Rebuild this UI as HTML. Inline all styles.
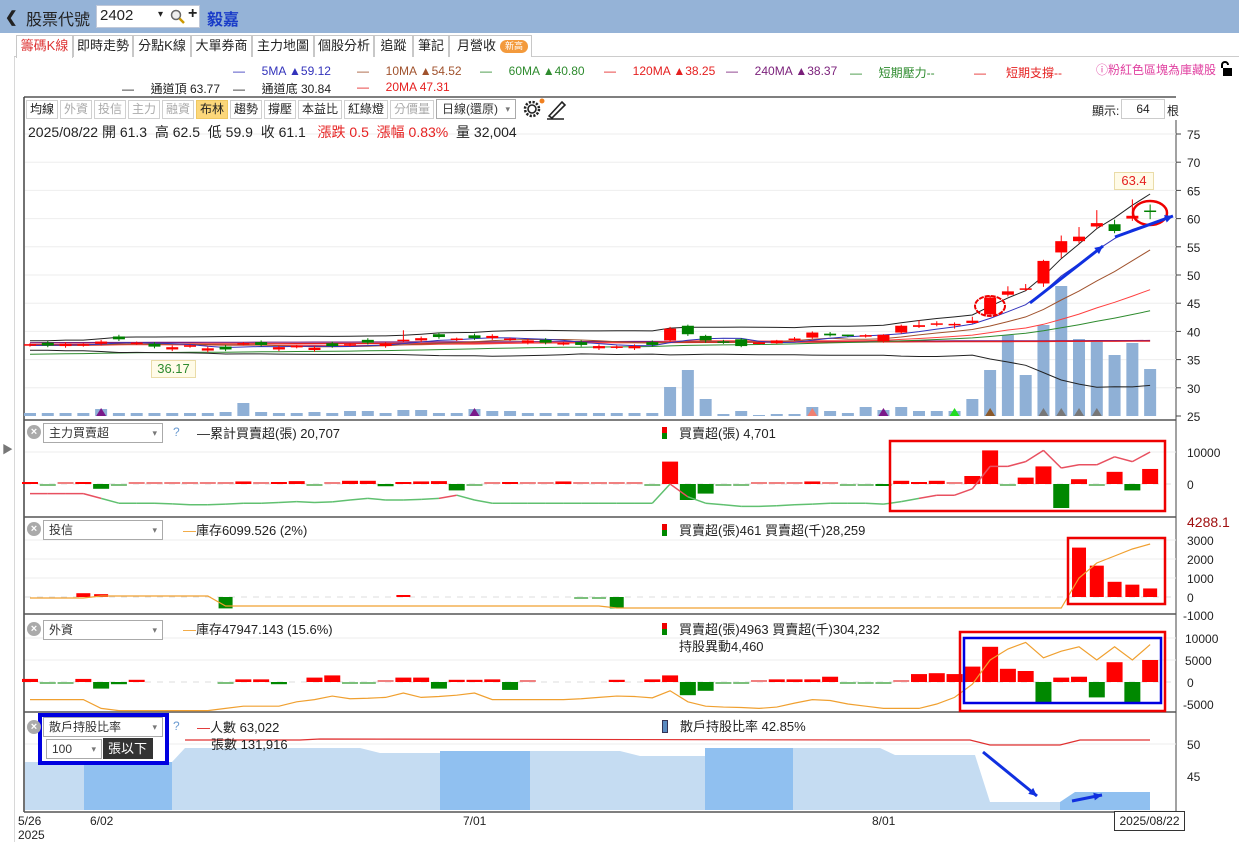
<!DOCTYPE html>
<html><head><meta charset="utf-8">
<style>
*{margin:0;padding:0;box-sizing:border-box}
body{width:1239px;height:845px;overflow:hidden;background:#fff;font-family:"Liberation Sans","Noto Sans CJK TC",sans-serif;position:relative;color:#222}
.a{position:absolute;white-space:nowrap}
#hdr{position:absolute;left:0;top:0;width:1239px;height:33px;background:#95b3d7}
.tab{position:absolute;top:35px;height:22px;border:1px solid #c8c8c8;border-bottom:none;font-size:13px;line-height:20px;text-align:center;background:#fff;color:#222}
.btn{position:absolute;top:100px;height:19px;border:1px solid #d0d0d0;font-size:12px;line-height:17px;text-align:center;background:#fff}
.lg{position:absolute;font-size:12px;white-space:nowrap}
.sel{position:absolute;height:20px;border:1px solid #aaa;background:#fff;font-size:12px;line-height:18px;padding-left:5px;color:#333}
.sel:after{content:"▾";position:absolute;right:5px;top:0;font-size:9px;color:#777}
.xc{position:absolute;width:14px;height:14px;border-radius:7px;background:#aaa;color:#fff;font-size:11px;line-height:14px;text-align:center;font-weight:bold}
.ax{position:absolute;font-size:12px;color:#222}
</style></head><body>
<div id="hdr"></div>
<div class="a" style="left:5px;top:8px;font-size:15px;font-weight:bold;color:#222">❮</div>
<div class="a" style="left:26px;top:6px;font-size:16px;color:#222">股票代號</div>
<div class="a" style="left:96px;top:5px;width:104px;height:23px;background:#fff;border:1px solid #c0c8d8"></div>
<div class="a" style="left:100px;top:7px;font-size:15px">2402</div>
<div class="a" style="left:158px;top:9px;font-size:10px">▾</div>
<svg class="a" style="left:170px;top:9px" width="16" height="16"><circle cx="6" cy="6" r="4.5" fill="#eee" stroke="#666" stroke-width="1.5"/><line x1="9.5" y1="9.5" x2="14" y2="14" stroke="#c90" stroke-width="2.5"/></svg>
<div class="a" style="left:188px;top:5px;font-size:16px;font-weight:bold">+</div>
<div class="a" style="left:207px;top:6px;font-size:16px;font-weight:bold;color:#1a3cc8">毅嘉</div>

<div class="a" style="left:14px;top:56px;width:1225px;height:1px;background:#ccc"></div>
<div class="tab" style="left:16px;width:57px;color:#d33;height:23px">籌碼K線</div>
<div class="tab" style="left:73px;width:60px">即時走勢</div>
<div class="tab" style="left:133px;width:58px">分點K線</div>
<div class="tab" style="left:191px;width:61px">大單券商</div>
<div class="tab" style="left:252px;width:62px">主力地圖</div>
<div class="tab" style="left:314px;width:60px">個股分析</div>
<div class="tab" style="left:374px;width:39px">追蹤</div>
<div class="tab" style="left:413px;width:36px">筆記</div>
<div class="tab" style="left:449px;width:83px;text-align:left;padding-left:7px">月營收<span style="display:inline-block;margin-left:4px;background:#f39a3c;color:#fff;border-radius:8px;font-size:9px;line-height:13px;padding:0 5px;vertical-align:1px">新高</span></div>
<div class="a" style="left:14px;top:57px;width:1px;height:785px;background:#d8d8d8"></div>
<div class="a" style="left:2px;top:441px;font-size:11px;color:#777">▶</div>

<div class="lg" style="left:233px;top:64px;color:#3333bb">—&nbsp;&nbsp;&nbsp;&nbsp;&nbsp;5MA ▲59.12</div>
<div class="lg" style="left:357px;top:64px;color:#a0522d">—&nbsp;&nbsp;&nbsp;&nbsp;&nbsp;10MA ▲54.52</div>
<div class="lg" style="left:480px;top:64px;color:#2e8b2e">—&nbsp;&nbsp;&nbsp;&nbsp;&nbsp;60MA ▲40.80</div>
<div class="lg" style="left:604px;top:64px;color:#e52020">—&nbsp;&nbsp;&nbsp;&nbsp;&nbsp;120MA ▲38.25</div>
<div class="lg" style="left:726px;top:64px;color:#7a1f7a">—&nbsp;&nbsp;&nbsp;&nbsp;&nbsp;240MA ▲38.37</div>
<div class="lg" style="left:850px;top:64px;color:#2e8b2e">—&nbsp;&nbsp;&nbsp;&nbsp;&nbsp;短期壓力--</div>
<div class="lg" style="left:974px;top:64px;color:#e52020">—&nbsp;&nbsp;&nbsp;&nbsp;&nbsp;&nbsp;短期支撐--</div>
<div class="lg" style="left:1096px;top:61px;color:#e040a0">ⓘ粉紅色區塊為庫藏股</div>
<svg class="a" style="left:1219px;top:61px" width="14" height="16"><path d="M3 7 V4 a3 3 0 0 1 6 0" fill="none" stroke="#000" stroke-width="2"/><rect x="4" y="7" width="9" height="8" fill="#000"/></svg>
<div class="lg" style="left:122px;top:80px;color:#222">—&nbsp;&nbsp;&nbsp;&nbsp;&nbsp;通道頂 63.77</div>
<div class="lg" style="left:233px;top:80px;color:#222">—&nbsp;&nbsp;&nbsp;&nbsp;&nbsp;通道底 30.84</div>
<div class="lg" style="left:357px;top:80px;color:#e52020">—&nbsp;&nbsp;&nbsp;&nbsp;&nbsp;20MA 47.31</div>

<svg id="ch" class="a" style="left:0;top:0" width="1239" height="845"></svg>

<div class="btn" style="left:26px;width:32px">均線</div>
<div class="btn" style="left:60px;width:32px;color:#aaa">外資</div>
<div class="btn" style="left:94px;width:32px;color:#aaa">投信</div>
<div class="btn" style="left:128px;width:32px;color:#aaa">主力</div>
<div class="btn" style="left:162px;width:32px;color:#aaa">融資</div>
<div class="btn" style="left:196px;width:32px;background:#fcd77a;border-color:#f0c860">布林</div>
<div class="btn" style="left:230px;width:32px">趨勢</div>
<div class="btn" style="left:264px;width:32px">撐壓</div>
<div class="btn" style="left:298px;width:44px">本益比</div>
<div class="btn" style="left:344px;width:44px">紅綠燈</div>
<div class="btn" style="left:390px;width:44px;color:#aaa">分價量</div>
<div class="sel" style="left:436px;top:99px;width:80px">日線(還原)</div>
<svg class="a" style="left:522px;top:98px" width="50" height="22"><circle cx="10" cy="11" r="4" fill="none" stroke="#222" stroke-width="1.6"/><circle cx="10" cy="11" r="7" fill="none" stroke="#222" stroke-width="2.5" stroke-dasharray="2.2 1.5"/><circle cx="20" cy="3" r="2.5" fill="#f08020"/><path d="M27 18 L40 4 L43 7 L30 20 Z M25 21 H42" fill="none" stroke="#222" stroke-width="1.6"/></svg>
<div class="a" style="left:1092px;top:102px;font-size:12px">顯示:</div>
<div class="a" style="left:1121px;top:99px;width:44px;height:20px;border:1px solid #ccc;font-size:12px;line-height:18px;text-align:center">64</div>
<div class="a" style="left:1167px;top:102px;font-size:12px">根</div>
<div class="a" style="left:28px;top:122px;font-size:14px">2025/08/22 開 61.3&nbsp; 高 62.5&nbsp; 低 59.9&nbsp; 收 61.1&nbsp;&nbsp; <span style="color:#e52020">漲跌 0.5&nbsp; 漲幅 0.83%</span>&nbsp; 量 32,004</div>

<div class="a" style="left:1114px;top:172px;width:40px;height:18px;background:#fffbe8;border:1px solid #eadca8;color:#e52020;font-size:13px;text-align:center;line-height:16px">63.4</div>
<div class="a" style="left:151px;top:360px;width:45px;height:18px;background:#fffbe8;border:1px solid #eadca8;color:#2e8b2e;font-size:13px;text-align:center;line-height:16px">36.17</div>

<div class="xc" style="left:27px;top:425px">×</div>
<div class="sel" style="left:43px;top:423px;width:120px">主力買賣超</div>
<div class="a" style="left:173px;top:425px;font-size:12px;color:#6a9ad0">?</div>
<div class="lg" style="left:197px;top:423px;font-size:13px">—累計買賣超(張) 20,707</div>
<div class="lg" style="left:662px;top:423px;font-size:13px"><span style="display:inline-block;width:5px;height:12px;background:linear-gradient(#e00 50%,#080 50%);vertical-align:-1px;margin-right:12px"></span>買賣超(張) 4,701</div>

<div class="xc" style="left:27px;top:522px">×</div>
<div class="sel" style="left:43px;top:520px;width:120px">投信</div>
<div class="lg" style="left:183px;top:520px;font-size:13px"><span style="color:#f0a030">—</span>庫存6099.526 (2%)</div>
<div class="lg" style="left:662px;top:520px;font-size:13px"><span style="display:inline-block;width:5px;height:12px;background:linear-gradient(#e00 50%,#080 50%);vertical-align:-1px;margin-right:12px"></span>買賣超(張)461 買賣超(千)28,259</div>

<div class="xc" style="left:27px;top:622px">×</div>
<div class="sel" style="left:43px;top:620px;width:120px">外資</div>
<div class="lg" style="left:183px;top:619px;font-size:13px"><span style="color:#f0a030">—</span>庫存47947.143 (15.6%)</div>
<div class="lg" style="left:662px;top:619px;font-size:13px"><span style="display:inline-block;width:5px;height:12px;background:linear-gradient(#e00 50%,#080 50%);vertical-align:-1px;margin-right:12px"></span>買賣超(張)4963 買賣超(千)304,232</div>
<div class="lg" style="left:679px;top:636px;font-size:13px">持股異動4,460</div>

<div class="a" style="left:38px;top:713px;width:131px;height:52px;background:#fff;border:4px solid #0000e0"></div>
<div class="xc" style="left:27px;top:720px">×</div>
<div class="sel" style="left:43px;top:717px;width:120px">散戶持股比率</div>
<div class="sel" style="left:46px;top:739px;width:56px">100</div>
<div class="a" style="left:103px;top:738px;width:50px;height:21px;background:#333;color:#fff;font-size:13px;line-height:21px;padding-left:5px">張以下</div>
<div class="a" style="left:173px;top:719px;font-size:12px;color:#6a9ad0">?</div>
<div class="lg" style="left:197px;top:717px;font-size:13px"><span style="color:#d22">—</span>人數 63,022</div>
<div class="lg" style="left:211px;top:734px;font-size:13px">張數 131,916</div>
<div class="lg" style="left:662px;top:716px;font-size:13px"><span style="display:inline-block;width:6px;height:13px;background:#5a8ac0;border:1px solid #335;vertical-align:-2px;margin-right:12px"></span>散戶持股比率 42.85%</div>

<div class="ax" style="left:18px;top:814px">5/26<br>2025</div>
<div class="ax" style="left:90px;top:814px">6/02</div>
<div class="ax" style="left:463px;top:814px">7/01</div>
<div class="ax" style="left:872px;top:814px">8/01</div>
<div class="a" style="left:1114px;top:811px;width:71px;height:20px;border:1px solid #333;font-size:12px;line-height:18px;text-align:center;background:#fff">2025/08/22</div>

<script>
var S=document.getElementById('ch'),h='';
function X(i){return 30+i*17.78}
function P(p){return 134+(75-p)*5.64}
function L(x1,y1,x2,y2,c,w,e){h+='<line x1="'+x1+'" y1="'+y1+'" x2="'+x2+'" y2="'+y2+'" stroke="'+c+'" stroke-width="'+(w||1)+'" '+(e||'')+'/>'}
function R(x,y,w,hh,c){if(hh<0){y+=hh;hh=-hh}h+='<rect x="'+x+'" y="'+y+'" width="'+w+'" height="'+hh+'" fill="'+c+'"/>'}
function T(x,y,t,c,s){h+='<text x="'+x+'" y="'+y+'" font-size="'+(s||12)+'" fill="'+(c||'#222')+'" font-family="Liberation Sans,sans-serif">'+t+'</text>'}
function PL(pts,c,w){h+='<polyline points="'+pts.join(' ')+'" fill="none" stroke="'+c+'" stroke-width="'+(w||1)+'"/>'}
L(24,97,1176,97,'#555',1.5);L(24,97,24,812,'#444',1.5);L(1176,120,1176,812,'#444',1);
[420,517,614,712,812].forEach(function(y){L(24,y,1176,y,'#555',1.5)});
for(var p=25;p<=75;p+=5){var y=P(p);if(p>25)L(25,y,1176,y,'#eee');T(1187,y+5,p);L(1176,y,1181,y,'#444')}
var base=[37.6,37.5,37.8,37.6,38.2,38.6,37.9,37.3,37.2,37.4,37.0,36.8,37.8,37.6,37.2,37.3,37.1,37.4,37.6,38.0,37.8,38.4,38.8,39.0,38.6,38.8,39.2,38.6,38.4,38.0,37.8,37.6,37.4,37.2,37.4,37.6];
var O=[],C=[],H=[],Lo=[];
for(var i=0;i<36;i++){var c=base[i],o=(i%3==0)?c:(i%2?c+0.5:c-0.4);O.push(o);C.push(c);H.push(Math.max(o,c)+0.3+(i==21?1.5:0));Lo.push(Math.min(o,c)-0.3)}
var k=[[38.4,40.5,40.8,38.2],[41,39.5,41.2,39.2],[39.2,38.4,39.4,38],[38.1,38,38.5,37.8],[38.6,37.4,38.8,37.2],[37.9,37.9,38.2,37.7],[37.9,38.4,38.5,37.8],[38.6,38.6,39,38.3],[38.9,39.8,40,38.7],[39.6,39.3,39.9,39.1],[39.3,39.1,39.4,39],[39.2,39.2,39.5,38.9],[38.2,39.4,39.5,38],[39.8,41,41.2,39.6],[40.8,41.1,42,40.6],[41.3,41.3,41.8,40.9],[41.2,41.2,41.6,40.5],[41.5,41.9,42.6,41.4],[43,46,46.3,42.8],[46.5,47.1,48,46.2],[47.4,47.5,48.4,47.2],[48.5,52.5,52.7,47.9],[54,56,57,53],[56,56.8,58.5,55.6],[58.6,59.2,61.5,58.2],[59,57.8,59.8,57.4],[60,60.5,63.4,59.6],[61.3,61.1,62.5,59.9]];
k.forEach(function(a){O.push(a[0]);C.push(a[1]);H.push(a[2]);Lo.push(a[3])});
var vt=[413,413,413,413,409,413,413,413,413,413,413,412,403,412,413,413,412,413,411,411,413,410,410,413,413,409,411,411,413,413,413,413,413,413,413,413,387,370,399,414,411,415,414,414,407,411,413,407,410,407,411,411,411,399,370,335,375,325,286,339,341,355,343,369];
for(i=0;i<64;i++)R(X(i)-6,vt[i],12,416-vt[i],'#8fb0d6');
function tri(i,c){var x=X(i);h+='<polygon points="'+(x-5)+',416 '+(x+5)+',416 '+x+',408" fill="'+c+'"/>'}
tri(4,'#7a1a8a');tri(25,'#7a1a8a');tri(44,'#f08070');tri(48,'#7a1a8a');tri(52,'#22dd22');tri(54,'#8b5a2b');[57,58,59,60].forEach(function(j){tri(j,'#777')});
var full=[];for(i=0;i<240;i++)full.push(37.5);var all=full.concat(C);
function ma(n){var r=[];for(var i=0;i<64;i++){var s=0;for(var j=0;j<n;j++)s+=all[240+i-j];r.push(s/n)}return r}
function line(arr,c,w){var pts=[];for(var i=0;i<64;i++)pts.push(X(i).toFixed(1)+','+P(arr[i]).toFixed(1));PL(pts,c,w)}
var m20=ma(20),up=[],dn=[];
for(i=0;i<64;i++){var s=0;for(var j=0;j<20;j++){var d=all[240+i-j]-m20[i];s+=d*d}var sd=Math.sqrt(s/20);up.push(m20[i]+2*sd+0.8);dn.push(m20[i]-2*sd-0.8)}
var m120=[],m240=[],m60=ma(60);for(i=0;i<64;i++){m120.push(37.7+i*0.009);m240.push(38.0+i*0.006);m60[i]=35.8+(m60[i]-37.4)*1.6+i*0.03}
line(m240,'#7a1f7a',1.2);line(m120,'#e52020',1.2);line(m60,'#2e8b2e',1);line(m20,'#ff4040',1);line(ma(10),'#a0522d',1);line(ma(5),'#3333bb',1);line(up,'#222',1);line(dn,'#222',1);
for(i=0;i<64;i++){var x=X(i),col=C[i]>O[i]?'#ff0000':(C[i]<O[i]?'#008000':(i==63?'#008000':'#ff0000'));
L(x,P(H[i]),x,P(Lo[i]),col,1);var t=P(Math.max(O[i],C[i])),b=P(Math.min(O[i],C[i]));
if(b-t<1.5)L(x-6,t,x+6,t,col,1.5);else R(x-6,t,12,b-t,col)}
h+='<ellipse cx="990" cy="306" rx="15" ry="10" fill="none" stroke="#e00" stroke-width="2" stroke-dasharray="5 1"/>';
h+='<ellipse cx="1150" cy="213" rx="17" ry="12" fill="none" stroke="#e00" stroke-width="2.5"/>';
function arr(x1,y1,x2,y2){L(x1,y1,x2,y2,'#1030e0',3);var a=Math.atan2(y2-y1,x2-x1),s=9;h+='<polygon points="'+x2+','+y2+' '+(x2-s*Math.cos(a-0.45))+','+(y2-s*Math.sin(a-0.45))+' '+(x2-s*Math.cos(a+0.45))+','+(y2-s*Math.sin(a+0.45))+'" fill="#1030e0"/>'}
arr(1030,303,1103,246);arr(1115,237,1173,216);
function grid(y){L(25,y,1176,y,'#eee')}
grid(452);T(1187,457,'10000');T(1187,489,'0');
L(25,484,1176,484,'#ddd',1,'stroke-dasharray="6 6"');
var p1=[0.5,-0.2,0.2,0.6,-1.5,-0.2,0.3,0.2,0.3,0.2,0.2,0.2,0.8,0.3,0.6,0.9,-0.2,0.2,1.0,1.0,-0.7,0.6,0.8,0.9,-2.0,-0.2,0.3,0.4,0.2,0.3,0.8,0.3,0.3,0.3,0.3,-0.2,7,-5,-3,-0.3,-0.3,0.3,0.3,0.3,0.8,0.3,-0.2,-0.3,-0.4,1.0,0.6,1.0,0.3,2.5,10.5,-0.3,2,5.5,-7.5,1.5,-0.3,3.8,-2,4.7];
function bars(v,zy,sc,hmin){for(var i=0;i<64;i++){var hh=v[i]*sc;if(Math.abs(hh)<hmin)hh=(v[i]>=0?-1:1)*-hmin;var c=v[i]>=0?(Math.abs(v[i])<0.35?'#f08080':'#f00'):(Math.abs(v[i])<0.35?'#7cc07c':'#080');R(X(i)-8,zy,16,-hh,c)}}
bars(p1,484,3.2,2);
var l1=[-3,-3,-3,-3,-4.5,-6,-6,-6,-6.2,-6.5,-6.5,-6.3,-6,-6,-5.8,-5.5,-5.8,-5.6,-5,-4.5,-5,-5,-4.8,-4.5,-3.5,-5,-6,-6,-6,-6,-6,-6,-6,-6,-6,-6,0,-4,-6,-6.5,-7,-7,-6.8,-6.5,-6.3,-6,-6,-6,-6.3,-5.5,-4.5,-3.5,-3.5,-1.5,5.5,5.5,7,10.5,5,6,6,8.5,7,10];
for(i=0;i<63;i++){L(X(i),484-l1[i]*3.2,X(i+1),484-l1[i+1]*3.2,(l1[i]>-4.8&&l1[i+1]>-4.8)?'#e85060':'#60c070',1.5)}
h+='<rect x="890" y="441" width="275" height="70" fill="none" stroke="#e00" stroke-width="2.5"/>';
[540,559,578].forEach(grid);T(1187,527,'4288.1','#a01010',14);T(1187,545,'3000');T(1187,564,'2000');T(1187,583,'1000');T(1187,602,'0');T(1183,620,'-1000');
L(25,597,1176,597,'#ddd',1,'stroke-dasharray="6 6"');
var p2=[];for(i=0;i<64;i++)p2.push(0);p2[3]=0.2;p2[4]=0.15;p2[11]=-0.6;p2[21]=0.1;p2[31]=-0.05;p2[32]=-0.05;p2[33]=-0.6;p2[59]=2.6;p2[60]=1.65;p2[61]=0.8;p2[62]=0.65;p2[63]=0.45;
for(i=0;i<64;i++){if(p2[i]==0)continue;var hh=p2[i]*19;if(Math.abs(hh)<2)hh=hh>0?2:-2;R(X(i)-7,597,14,-hh,p2[i]>0?(p2[i]<0.1?'#f08080':'#f00'):(p2[i]>-0.1?'#7cc07c':'#080'))}
var l2=[];for(i=0;i<64;i++){l2.push(i<4?598:i<11?596:i<33?606:608)}l2[58]=608;l2[59]=578;l2[60]=563;l2[61]=556;l2[62]=549;l2[63]=544;
var pp=[];for(i=0;i<64;i++)pp.push(X(i)+','+l2[i]);PL(pp,'#f0a030',1.2);
h+='<rect x="1068" y="538" width="97" height="66" fill="none" stroke="#e00" stroke-width="2.5"/>';
[638,660].forEach(grid);T(1185,643,'10000');T(1185,665,'5000');T(1187,687,'0');T(1183,709,'-5000');
L(25,682,1176,682,'#ddd',1,'stroke-dasharray="6 6"');
var p3=[0.7,-0.2,-0.2,0.7,-1.5,-0.5,0.5,0,0,0,0,-0.2,0.6,0.6,-0.5,0,1,1.5,-0.3,-0.3,0.2,1,1,-1.5,0.5,0.5,0.6,-1.8,0.2,0,0,0,0,0.5,0,0.6,1.5,-3,-2,-0.3,-0.3,0.3,0.6,0.6,0.6,1.2,-0.2,-0.3,-0.3,0.2,1.8,2,1.8,3.5,8,3,2.5,-5,1,1.2,-3.5,4.5,-5,5];
for(i=0;i<64;i++){if(p3[i]==0){continue}var hh=p3[i]*4.4;if(Math.abs(hh)<2)hh=hh>0?2:-2;R(X(i)-8,682,16,-hh,p3[i]>0?(p3[i]<0.35?'#f08080':'#f00'):(p3[i]>-0.35?'#7cc07c':'#080'))}
var l3=[-4,-4,-4,-4,-6,-6.5,-6.5,-6.5,-6.5,-6.5,-6.5,-6,-5.5,-5.5,-5.5,-4.5,-4,-3.2,-3.8,-3.7,-3.5,-2.5,-3.5,-3.3,-3,-2.5,-4,-4,-4,-4,-4,-3.8,-3.5,-3.2,-3.3,-3.6,-2,-4.5,-5.5,-5.7,-5.8,-6,-5.7,-4.8,-4,-4.2,-5,-5.5,-6,-6,-6,-5,-3.5,-0.5,5,7.5,9,5.5,7,8,5,8,5,8.5];
pp=[];for(i=0;i<64;i++)pp.push(X(i)+','+(682-l3[i]*4.4));PL(pp,'#f0a030',1.2);
h+='<rect x="960" y="632" width="205" height="79" fill="none" stroke="#e00" stroke-width="2.5"/>';
h+='<rect x="964" y="638" width="197" height="65" fill="none" stroke="#0000e0" stroke-width="2.5"/>';
T(1187,749,'50');T(1187,781,'45');grid(744);
h+='<polygon points="25,762 84,762 84,810 25,810" fill="#c5dcf2"/>';
h+='<rect x="84" y="762" width="88" height="48" fill="#90c0f0"/>';
h+='<polygon points="172,762 185,748 360,748 380,753 440,753 440,810 172,810" fill="#c5dcf2"/>';
h+='<polygon points="440,751 530,751 530,810 440,810" fill="#90c0f0"/>';
h+='<polygon points="530,751 620,751 640,756 705,756 705,810 530,810" fill="#c5dcf2"/>';
h+='<polygon points="705,748 793,748 793,810 705,810" fill="#90c0f0"/>';
h+='<polygon points="793,748 880,748 895,755 975,755 990,802 1060,802 1060,810 793,810" fill="#c5dcf2"/>';
h+='<polygon points="1060,802 1075,792 1150,792 1150,810 1060,810" fill="#90c0f0"/>';
PL(['185,740','300,740','320,739','880,740','970,740','990,745','1060,745','1080,740','1150,740'],'#e03030',1.2);
arr(983,752,1037,796);arr(1072,801,1102,795);
S.innerHTML=h;
</script>
</body></html>
